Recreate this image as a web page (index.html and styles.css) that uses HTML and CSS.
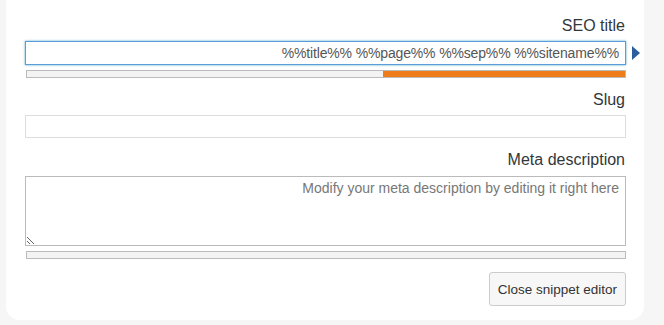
FILE: index.html
```html
<!DOCTYPE html>
<html lang="en">
<head>
    <meta charset="UTF-8">
    <meta name="viewport" content="width=device-width, initial-scale=1.0">
    <title>Snippet editor</title>
    <link rel="stylesheet" href="styles.css">
</head>
<body>
    <div class="card">
        <div class="field">
            <label class="label" for="seo-title">SEO title</label>
            <div class="input-row">
                <input type="text" id="seo-title" class="input focused" value="%%title%% %%page%% %%sep%% %%sitename%%">
                <svg class="arrow" width="8" height="14" viewBox="0 0 8 14"><path d="M0 0 L8 7 L0 14 Z" fill="#2b5c9e"/></svg>
            </div>
            <div class="progress"><div class="progress-fill" style="width: 40.5%"></div></div>
        </div>

        <div class="field">
            <label class="label" for="slug">Slug</label>
            <input type="text" id="slug" class="input slug">
        </div>

        <div class="field">
            <label class="label meta" for="metadesc">Meta description</label>
            <textarea id="metadesc" class="textarea" dir="rtl" placeholder="Modify your meta description by editing it right here"></textarea>
            <div class="progress"></div>
        </div>

        <div class="actions">
            <button class="button">Close snippet editor</button>
        </div>
    </div>
</body>
</html>
```

FILE: styles.css
```css
body {
    margin: 0;
    background-color: #f6f6f6;
    font-family: "Liberation Sans", Arial, sans-serif;
    color: #333;
}
.card {
    margin-left: 6px;
    width: 638px;
    box-sizing: border-box;
    height: 320px;
    padding: 16px 19px 0 19px;
    background-color: #ffffff;
    border-radius: 0 0 14px 14px;
}
.field {
    margin-bottom: 12px;
}
.label {
    display: block;
    text-align: right;
    font-size: 16px;
    line-height: 20px;
    margin-bottom: 5px;
    color: #32373c;
}
.label.meta {
    margin-bottom: 6px;
}
.input-row {
    display: flex;
    align-items: center;
    width: 620px;
}
.input {
    box-sizing: border-box;
    width: 601px;
    height: 24px;
    padding: 0 6px;
    border: 1px solid #ddd;
    font-family: "Liberation Sans", Arial, sans-serif;
    font-size: 14px;
    letter-spacing: -0.15px;
    color: #555;
    text-align: right;
    outline: none;
    background: #fff;
}
.input.focused {
    border-color: #5b9dd9;
    box-shadow: 0 0 2px rgba(30, 140, 190, 0.8);
}
.input.slug {
    height: 23px;
}
.arrow {
    margin-left: 6px;
}
.progress {
    box-sizing: border-box;
    width: 600px;
    margin-left: 1px;
    height: 8px;
    margin-top: 5px;
    border: 1px solid #bbb;
    background-color: #f3f3f3;
    display: flex;
    justify-content: flex-end;
}
.progress-fill {
    height: 100%;
    background-color: #ee7c1b;
}
.textarea {
    display: block;
    box-sizing: border-box;
    width: 601px;
    height: 70px;
    padding: 2px 6px;
    border: 1px solid #bbb;
    font-family: "Liberation Sans", Arial, sans-serif;
    font-size: 14px;
    line-height: 19px;
    color: #333;
    outline: none;
}
.textarea::placeholder {
    color: #777;
}
.actions {
    display: flex;
    justify-content: flex-end;
    width: 601px;
    margin-top: 13px;
}
.button {
    height: 34px;
    padding: 0 8px;
    border: 1px solid #ccc;
    border-radius: 3px;
    background-color: #f7f7f7;
    font-family: "Liberation Sans", Arial, sans-serif;
    font-size: 13.5px;
    color: #333;
    cursor: pointer;
}
```
